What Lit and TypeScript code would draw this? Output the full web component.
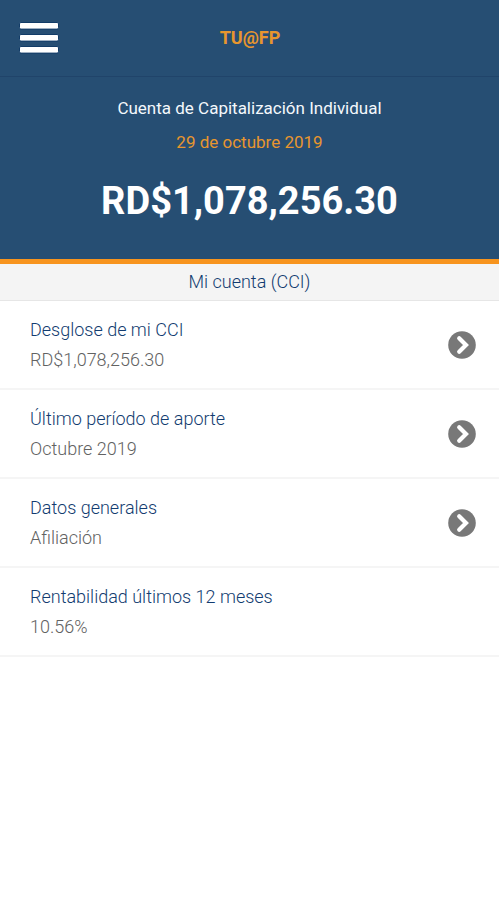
import { LitElement, html, css, svg, nothing } from "lit";
import { customElement, property } from "lit/decorators.js";

interface AccountItem {
  label: string;
  value: string;
  link: boolean;
}

const items: AccountItem[] = [
  { label: "Desglose de mi CCI", value: "RD$1,078,256.30", link: true },
  { label: "Último período de aporte", value: "Octubre 2019", link: true },
  { label: "Datos generales", value: "Afiliación", link: true },
  { label: "Rentabilidad últimos 12 meses", value: "10.56%", link: false },
];

const menuIcon = svg`
  <svg width="40" height="32" viewBox="0 0 40 32" aria-hidden="true">
    <g fill="#fff" stroke="#123c68" stroke-width="1">
      <rect x="0.5" y="0.5" width="39" height="6.6" rx="1.4" />
      <rect x="0.5" y="12.5" width="39" height="6.6" rx="1.4" />
      <rect x="0.5" y="24.5" width="39" height="6.6" rx="1.4" />
    </g>
  </svg>`;

const chevronIcon = svg`
  <svg width="28" height="28" viewBox="0 0 28 28" aria-hidden="true">
    <circle cx="14" cy="14" r="13.8" fill="#787878" />
    <path d="M11.2 7.2 L18 14 L11.2 20.8" fill="none" stroke="#fff" stroke-width="4.2" stroke-linecap="round" />
  </svg>`;

@customElement("account-row")
export class AccountRow extends LitElement {
  @property({ attribute: false }) item!: AccountItem;

  static styles = css`
    :host {
      display: block;
      border-bottom: 2px solid #f5f5f5;
    }
    .row {
      display: flex;
      align-items: center;
      justify-content: space-between;
      padding: 14px 23px 13px 30px;
      text-decoration: none;
    }
    .text {
      display: flex;
      flex-direction: column;
    }
    .label,
    .value {
      font-size: 18px;
      line-height: 30px;
      font-weight: 300;
    }
    .label {
      color: #123c70;
    }
    .value {
      color: #626262;
    }
    svg {
      display: block;
      flex: none;
    }
  `;

  render() {
    const { label, value, link } = this.item;
    const content = html`
      <span class="text">
        <span class="label">${label}</span>
        <span class="value">${value}</span>
      </span>
      ${link ? chevronIcon : nothing}
    `;
    return link
      ? html`<a class="row" href="#">${content}</a>`
      : html`<div class="row">${content}</div>`;
  }
}

@customElement("app-root")
export class AppRoot extends LitElement {
  static styles = css`
    :host {
      display: block;
      min-height: 100vh;
      background: #fff;
      font-family: Roboto, "Liberation Sans", sans-serif;
    }
    .bar {
      display: grid;
      grid-template-columns: 40px 1fr 40px;
      align-items: center;
      height: 76px;
      padding: 0 18px 0 19px;
      background: #264e73;
      border-bottom: 1px solid #20446a;
    }
    .menu {
      padding: 0;
      border: 0;
      background: none;
      cursor: pointer;
    }
    .menu svg {
      display: block;
    }
    h1,
    h2,
    p {
      margin: 0;
    }
    .brand {
      font-size: 18px;
      line-height: 24px;
      font-weight: 700;
      text-align: center;
      color: #e8962e;
    }
    .summary {
      padding: 16px 16px 34px;
      background: #264e73;
      border-bottom: 5px solid #f7941e;
      text-align: center;
    }
    .account {
      font-size: 17px;
      line-height: 30px;
      font-weight: 400;
      color: #f4f8fc;
    }
    .date {
      margin-top: 4px;
      font-size: 17px;
      line-height: 30px;
      color: #e8962e;
    }
    .balance {
      margin-top: 20px;
      font-size: 38px;
      line-height: 48px;
      font-weight: 700;
      color: #fff;
    }
    .section {
      background: #f4f4f4;
      border-bottom: 1px solid #e6e6e6;
      font-size: 18px;
      line-height: 36px;
      font-weight: 300;
      text-align: center;
      color: #123c70;
    }
  `;

  render() {
    return html`
      <header class="bar">
        <button class="menu" type="button" aria-label="Menú">${menuIcon}</button>
        <h1 class="brand">TU@FP</h1>
      </header>
      <main>
        <section class="summary">
          <h2 class="account">Cuenta de Capitalización Individual</h2>
          <p class="date">29 de octubre 2019</p>
          <p class="balance">RD$1,078,256.30</p>
        </section>
        <h2 class="section">Mi cuenta (CCI)</h2>
        ${items.map((item) => html`<account-row .item=${item}></account-row>`)}
      </main>
    `;
  }
}
